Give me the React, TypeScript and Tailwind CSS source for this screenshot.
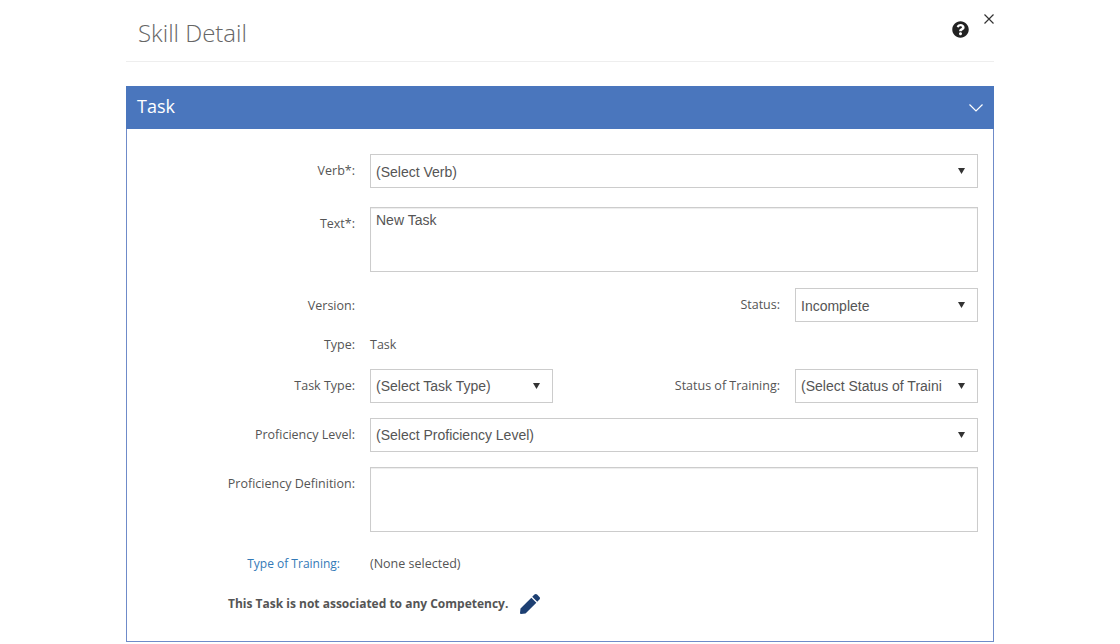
import type { ReactNode } from "react";
import { FaPen, FaQuestionCircle } from "react-icons/fa";

const openSans = { fontFamily: '"Open Sans", sans-serif' };

function Label({ children, className = "w-[229px]" }: { children: ReactNode; className?: string }) {
  return <div className={`${className} shrink-0 text-right text-[12.5px] leading-[16px] text-[#555]`}>{children}</div>;
}

function Select({ value, className = "", textClass = "pt-[2px]" }: { value: string; className?: string; textClass?: string }) {
  return (
    <div className={`flex h-[34px] items-center border border-[#ccc] bg-white pl-[5px] pr-[12px] ${className}`}>
      <span className={`min-w-0 flex-1 overflow-hidden whitespace-nowrap font-['Liberation_Sans',sans-serif] text-[14px] text-[#555] ${textClass}`}>
        {value}
      </span>
      <svg width="7" height="6" viewBox="0 0 7 6" className="ml-[15px] shrink-0">
        <path d="M0 0h7L3.5 6z" fill="#333" />
      </svg>
    </div>
  );
}

function TextArea({ value = "" }: { value?: string }) {
  return (
    <div className="h-[65px] flex-1 border border-[#ccc] bg-white px-[5px] pt-[2px] font-['Liberation_Sans',sans-serif] text-[14px] leading-[20px] text-[#555] shadow-[inset_0_1px_1px_rgba(0,0,0,0.075)]">
      {value}
    </div>
  );
}

export default function App() {
  return (
    <div className="h-[644px] w-[1120px] overflow-hidden bg-white" style={openSans}>
      <div className="ml-[126px] w-[868px]">
        <header className="relative flex h-[62px] items-center border-b border-[#eee] pl-[12px] pr-[25px]">
          <h1 className="flex-1 pt-[4px] text-[24px] font-light text-[#666]">Skill Detail</h1>
          <FaQuestionCircle size={17} className="mb-[2px] text-[#222]" />
          <svg width="10" height="10" viewBox="0 0 10 10" className="absolute right-0 top-[14px]">
            <path d="M0.5 0.5l9 9M9.5 0.5l-9 9" stroke="#333" strokeWidth="1.2" />
          </svg>
        </header>

        <section className="mt-[24px] h-[556px] border-x border-b border-[#6f8bc9]">
          <div className="-mx-px flex h-[43px] items-center bg-[#4a76bd] pl-[11px] pr-[11px] text-white">
            <span className="flex-1 pb-[2px] text-[18px] font-normal">Task</span>
            <svg width="14" height="8" viewBox="0 0 14 8">
              <path d="M0.5 0.5L7 7l6.5-6.5" fill="none" stroke="#fff" strokeWidth="1.2" />
            </svg>
          </div>

          <div className="flex flex-col pr-[15px] pt-[25px]">
            <div className="flex gap-[15px]">
              <Label className="w-[228px] pt-[9px]">Verb*:</Label>
              <Select value="(Select Verb)" className="flex-1" />
            </div>

            <div className="mt-[19px] flex gap-[15px]">
              <Label className="w-[228px] pt-[9px]">Text*:</Label>
              <TextArea value="New Task" />
            </div>

            <div className="mt-[16px] flex h-[34px] gap-[15px]">
              <Label className="w-[228px] pt-[10px]">Version:</Label>
              <div className="flex flex-1 justify-end gap-[15px]">
                <Label className="pt-[9px]">Status:</Label>
                <Select value="Incomplete" className="w-[183px]" />
              </div>
            </div>

            <div className="mt-[15px] flex gap-[15px]">
              <Label className="w-[228px]">Type:</Label>
              <span className="text-[12.5px] leading-[16px] text-[#555]">Task</span>
            </div>

            <div className="mt-[16px] flex h-[34px] gap-[15px]">
              <Label className="w-[228px] pt-[9px]">Task Type:</Label>
              <Select value="(Select Task Type)" className="w-[183px]" textClass="pt-0" />
              <div className="flex flex-1 justify-end gap-[15px]">
                <Label className="pt-[9px]">Status of Training:</Label>
                <Select value="(Select Status of Traini" className="w-[183px]" textClass="pt-0" />
              </div>
            </div>

            <div className="mt-[15px] flex gap-[15px]">
              <Label className="w-[228px] pt-[9px]">Proficiency Level:</Label>
              <Select value="(Select Proficiency Level)" className="flex-1" textClass="pt-0" />
            </div>

            <div className="mt-[15px] flex gap-[15px]">
              <Label className="w-[228px] pt-[9px]">Proficiency Definition:</Label>
              <TextArea />
            </div>

            <div className="mt-[24px] flex gap-[30px]">
              <Label className="w-[213px]">
                <span className="text-[12px] text-[#337ab7]">Type of Training:</span>
              </Label>
              <span className="text-[12.5px] leading-[16px] text-[#555]">(None selected)</span>
            </div>

            <div className="mt-[22px] flex items-center pl-[101px]">
              <span className="text-[12px] font-bold leading-[16px] text-[#555]">
                This Task is not associated to any Competency.
              </span>
              <FaPen size={20} className="ml-[12px] text-[#1d3f72]" />
            </div>
          </div>
        </section>
      </div>
    </div>
  );
}
